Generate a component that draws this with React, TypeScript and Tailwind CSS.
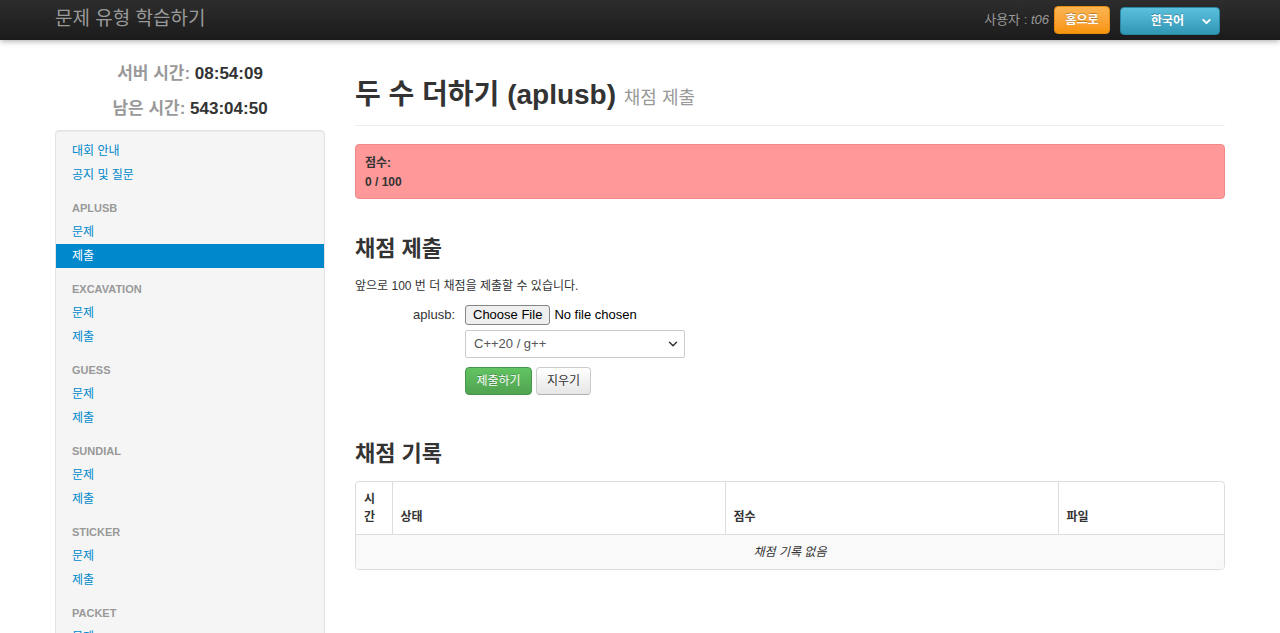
import { ChevronDown } from "lucide-react";

const FONT = "font-['Liberation_Sans','Noto_Sans_CJK_KR',sans-serif]";

const tasks = ["APLUSB", "EXCAVATION", "GUESS", "SUNDIAL", "STICKER", "PACKET"];

function NavItem({ label, active }: { label: string; active?: boolean }) {
  return (
    <li>
      <a
        className={
          active
            ? "block px-4 py-[3px] text-[12px] leading-[18px] text-white bg-[#0088cc]"
            : "block px-4 py-[3px] text-[12px] leading-[18px] text-[#0088cc]"
        }
      >
        {label}
      </a>
    </li>
  );
}

function Sidebar() {
  return (
    <div className="w-[270px] shrink-0">
      <div className="pt-[16px] text-center text-[17px] font-bold">
        <div className="leading-[35px]">
          <span className="text-[#999]">서버 시간:</span> <span className="text-[#333]">08:54:09</span>
        </div>
        <div className="leading-[35px]">
          <span className="text-[#999]">남은 시간:</span> <span className="text-[#333]">543:04:50</span>
        </div>
      </div>
      <div className="mt-[4px] rounded-[4px] border border-[#e3e3e3] bg-[#f5f5f5] py-[8px] shadow-[inset_0_1px_1px_rgba(0,0,0,0.05)]">
        <ul>
          <NavItem label="대회 안내" />
          <NavItem label="공지 및 질문" />
          {tasks.map((t) => (
            <li key={t}>
              <div className="mt-[9px] px-4 py-[3px] text-[11px] font-bold leading-[18px] text-[#999] uppercase">{t}</div>
              <ul>
                <NavItem label="문제" />
                <NavItem label="제출" active={t === "APLUSB"} />
              </ul>
            </li>
          ))}
        </ul>
      </div>
    </div>
  );
}

function Navbar() {
  return (
    <div className="h-10 bg-gradient-to-b from-[#2d2d2d] to-[#1b1b1b] shadow-[0_1px_6px_rgba(0,0,0,0.35)]">
      <div className="mx-auto flex h-10 w-[1170px] items-center justify-between">
        <div className="text-[19px] leading-[36px] text-[#999] -mt-[3px]">문제 유형 학습하기</div>
        <div className="flex items-center">
          <span className="text-[13px] text-[#999]">
            사용자 : <i>t06</i>
          </span>
          <button className="ml-[5px] h-[28px] w-[56px] rounded-[4px] border border-[#e38d13] bg-gradient-to-b from-[#fbb450] to-[#f89406] text-[12px] font-bold text-white [text-shadow:0_-1px_0_rgba(0,0,0,0.25)]">
            홈으로
          </button>
          <div className="ml-[10px] mr-[5px] mt-[2px] flex h-[28px] w-[100px] items-center rounded-[4px] border border-[#2a85a0] bg-gradient-to-b from-[#5bc0de] to-[#2f96b4] pl-[30px] pr-[6px] text-white">
            <span className="flex-1 text-[12px] font-bold [text-shadow:0_-1px_0_rgba(0,0,0,0.25)]">한국어</span>
            <ChevronDown className="h-[13px] w-[13px]" strokeWidth={3.5} />
          </div>
        </div>
      </div>
    </div>
  );
}

function Main() {
  return (
    <div className="w-[870px] shrink-0 pt-[35px] text-[#333]">
      <div className="border-b border-[#eee] pb-[7px]">
        <h1 className="text-[28px] font-bold leading-[40px]">
          두 수 더하기 (aplusb) <span className="text-[18px] font-normal text-[#999]">채점 제출</span>
        </h1>
      </div>

      <div className="mt-[18px] rounded-[4px] border border-[#f08a8a] bg-[#ff9999] pb-[6px] pl-[9px] pt-[9px] text-[12px] font-bold leading-[19px] text-[#333]">
        <div>점수:</div>
        <div>0 / 100</div>
      </div>

      <h2 className="mt-[32px] text-[22px] font-bold leading-[36px]">채점 제출</h2>
      <p className="mt-[10px] text-[12px] leading-[18px]">앞으로 100 번 더 채점을 제출할 수 있습니다.</p>

      <div className="mt-[10px] flex">
        <div className="w-[100px] pt-[1px] text-right text-[13px] leading-[18px]">aplusb:</div>
        <div className="ml-[10px] flex flex-col">
          <div className="flex items-center">
            <span className="flex h-[20px] items-center rounded-[3px] border border-[#858585] bg-[#efefef] px-[7px] text-[13px] text-black">
              Choose File
            </span>
            <span className="ml-[4px] text-[13px] text-black">No file chosen</span>
          </div>
          <div className="mt-[5px] flex h-[28px] w-[220px] items-center rounded-[2px] border border-[#ccc] bg-white pl-[8px] pr-[4px] text-[13px] text-[#555]">
            <span className="flex-1">C++20 / g++</span>
            <ChevronDown className="h-[14px] w-[14px] text-[#333]" strokeWidth={2.5} />
          </div>
          <div className="mt-[9px] flex">
            <button className="h-[28px] w-[67px] rounded-[4px] border border-[#46954a] bg-gradient-to-b from-[#62c462] to-[#51a351] text-[12px] text-white [text-shadow:0_-1px_0_rgba(0,0,0,0.25)]">
              제출하기
            </button>
            <button className="ml-[4px] h-[28px] w-[55px] rounded-[4px] border border-[#ccc] border-b-[#b3b3b3] bg-gradient-to-b from-white to-[#e6e6e6] text-[12px] text-[#333]">
              지우기
            </button>
          </div>
        </div>
      </div>

      <h2 className="mt-[41px] text-[22px] font-bold leading-[36px]">채점 기록</h2>

      <div className="mt-[9px] overflow-hidden rounded-[4px] border border-[#ddd]">
        <table className="w-full table-fixed border-collapse text-[12px] leading-[18px]">
          <colgroup>
            <col className="w-[36px]" />
            <col className="w-[333px]" />
            <col className="w-[333px]" />
            <col />
          </colgroup>
          <thead>
            <tr>
              <th className="px-[8px] pb-[8px] pt-[8px] text-left align-bottom font-bold">시간</th>
              <th className="border-l border-[#ddd] px-[8px] pb-[8px] text-left align-bottom font-bold">상태</th>
              <th className="border-l border-[#ddd] px-[8px] pb-[8px] text-left align-bottom font-bold">점수</th>
              <th className="border-l border-[#ddd] px-[8px] pb-[8px] text-left align-bottom font-bold">파일</th>
            </tr>
          </thead>
          <tbody>
            <tr className="bg-[#f9f9f9]">
              <td colSpan={4} className="border-t border-[#ddd] py-[8px] text-center italic">
                채점 기록 없음
              </td>
            </tr>
          </tbody>
        </table>
      </div>
    </div>
  );
}

export default function App() {
  return (
    <div className={`min-h-screen bg-white ${FONT}`}>
      <Navbar />
      <div className="mx-auto flex w-[1170px] gap-[30px]">
        <Sidebar />
        <Main />
      </div>
    </div>
  );
}
